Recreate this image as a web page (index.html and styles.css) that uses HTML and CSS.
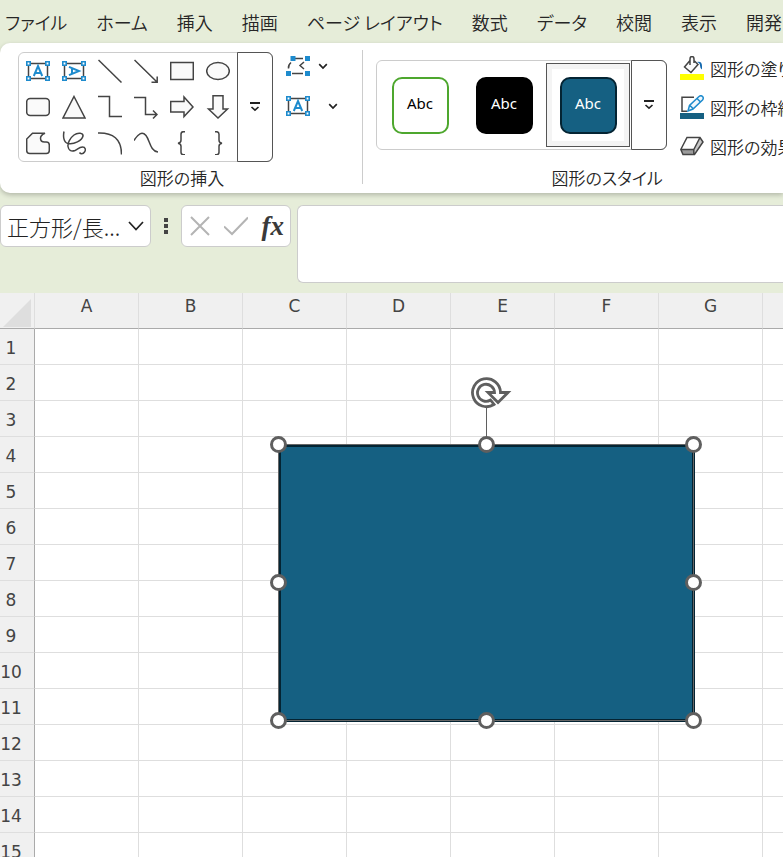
FILE: index.html
```html
<!DOCTYPE html>
<html lang="ja">
<head>
<meta charset="utf-8">
<title>Book1</title>
<link rel="stylesheet" href="styles.css">
</head>
<body>
<svg class="defs" aria-hidden="true">
  <symbol id="textbox" viewBox="0 0 24 20">
    <path class="ln" d="M2.500 2.500h19v15h-19z"/>
    <g class="knob"><path d="M.8.8h3.400v3.400H.8zM19.800.8h3.400v3.400h-3.400zM.8 15.800h3.400v3.400H.8zM19.800 15.800h3.400v3.400h-3.400z"/></g>
  </symbol>
  <symbol id="more" viewBox="0 0 12 12"><path class="dk" d="M1 2h10" stroke-width="2"/><path class="dk" d="M2.500 6L6 9.200 9.500 6" stroke-width="1.600"/></symbol>
  <symbol id="chev" viewBox="0 0 10 10"><path class="dk" d="M1.200 3.200L5 7l3.800-3.800" stroke-width="1.700"/></symbol>
</svg>

<nav class="tabs">
  <a href="#">ファイル</a><a href="#">ホーム</a><a href="#">挿入</a><a href="#">描画</a><a href="#">ページ レイアウト</a><a href="#">数式</a><a href="#">データ</a><a href="#">校閲</a><a href="#">表示</a><a href="#">開発</a>
</nav>

<section class="ribbon">
  <div class="group insert">
    <div class="tools">
      <div class="gallery">
        <div class="shapes">
          <button aria-label="テキスト ボックス"><svg viewBox="0 0 24 24"><use href="#textbox" x="0" y="2" width="24" height="20"/><path class="bl" d="M7.800 17L12 7l4.200 10M9.200 14h5.600"/></svg></button>
          <button aria-label="縦書きテキスト ボックス"><svg viewBox="0 0 24 24"><use href="#textbox" x="0" y="2" width="24" height="20"/><path class="bl" d="M7 7.800L17 12 7 16.200M10 9.200v5.600"/></svg></button>
          <button aria-label="線"><svg viewBox="0 0 24 24"><path class="ln" d="M.5 1l23 22.500"/></svg></button>
          <button aria-label="線矢印"><svg viewBox="0 0 24 24"><path class="ln" d="M.5 1l22.500 22M17.500 23.200h5.700v-5.700"/></svg></button>
          <button aria-label="正方形/長方形"><svg viewBox="0 0 24 24"><path class="ln fl" d="M.7 3.500h22.600v17H.7z"/></svg></button>
          <button aria-label="楕円"><svg viewBox="0 0 24 24"><ellipse class="ln fl" cx="12" cy="12" rx="11.300" ry="8.500"/></svg></button>
          <button aria-label="角丸四角形"><svg viewBox="0 0 24 24"><rect class="ln fl" x=".7" y="3.500" width="22.600" height="17" rx="3.500"/></svg></button>
          <button aria-label="二等辺三角形"><svg viewBox="0 0 24 24"><path class="ln fl" d="M12 1.500L23 23H1z"/></svg></button>
          <button aria-label="カギ線コネクタ"><svg viewBox="0 0 24 24"><path class="ln" d="M0 1.500h11.500v20H24"/></svg></button>
          <button aria-label="カギ線矢印コネクタ"><svg viewBox="0 0 24 24"><path class="ln" d="M0 2.500h11.500v17H23M19 15.500l4 4-4 4"/></svg></button>
          <button aria-label="右矢印"><svg viewBox="0 0 24 24"><path class="ln fl" d="M.7 6.500H14v-4.500l9 10-9 9.500v-4.500H.7z"/></svg></button>
          <button aria-label="下矢印"><svg viewBox="0 0 24 24"><path class="ln fl" d="M7 .7h10v13.300h4.500L12 23 2.500 14H7z"/></svg></button>
          <button aria-label="フリーフォーム"><svg viewBox="0 0 24 24"><path class="ln fl" d="M6.500 2.200h12.500c-2 .8-4.500 2-4.500 5 0 2.500 1.500 3.800 4 3.800h1.800q3 0 3 3v5.500q0 3-3 3H3.700q-3 0-3-3V8z"/></svg></button>
          <button aria-label="フリーハンド"><svg viewBox="0 0 24 24"><path class="ln" d="M2 .5C1 5 1.500 11.500 6 12.500c6 1.200 14-3 15-7.500.5-3-5-4-9-1-4 3-6.500 8-6 11.500s3 5.500 7 4c3-1.300 4-3.500 7.500-3.500 3 0 3.500 3 2 5-1.500 2.500-4 2-5 .5"/></svg></button>
          <button aria-label="円弧"><svg viewBox="0 0 24 24"><path class="ln" d="M0 2c15-.5 23.500 6 23.500 21.500"/></svg></button>
          <button aria-label="曲線"><svg viewBox="0 0 24 24"><path class="ln" d="M0 9.500C4 3 8 0 12 4.500c4 5 4 15.500 12 16.500"/></svg></button>
          <button aria-label="左中かっこ"><svg viewBox="0 0 24 24"><path class="ln" d="M15 .7h-1.500q-2.500 0-2.500 2.500v6q0 2.500-3 3 3 .5 3 3v6q0 2.500 2.500 2.500H15"/></svg></button>
          <button aria-label="右中かっこ"><svg viewBox="0 0 24 24"><path class="ln" d="M9 .7h1.500q2.500 0 2.500 2.500v6q0 2.500 3 3-3 .5-3 3v6q0 2.500-2.500 2.500H9"/></svg></button>
        </div>
        <button class="expand" aria-label="その他の図形"><svg width="12" height="12"><use href="#more"/></svg></button>
      </div>
      <div class="edit">
        <button aria-label="図形の編集"><svg width="24" height="20" viewBox="0 0 24 20"><path class="ln" d="M9 2.500h8M6 17.500h11M5 6.500Q2 9 2.500 12.500M18 6l-4 3.500 4 3.500"/><path fill="#1e8bcd" d="M4.500 0h5v5h-5zM19 0h5v5h-5zM0 15h5v5H0zM19 15h5v5h-5z"/></svg><svg width="10" height="10"><use href="#chev"/></svg></button>
        <button class="wide" aria-label="テキスト ボックスの描画"><svg width="24" height="20" viewBox="0 0 24 20"><use href="#textbox" width="24" height="20"/><path class="bl" d="M7.800 15L12 5l4.200 10M9.200 12h5.600"/></svg><svg width="10" height="10"><use href="#chev"/></svg></button>
      </div>
    </div>
    <div class="caption">図形の挿入</div>
  </div>

  <div class="group styles">
    <div class="tools">
      <div class="gallery presets">
        <button class="preset"><span class="swatch green">Abc</span></button>
        <button class="preset"><span class="swatch black">Abc</span></button>
        <button class="preset selected"><span class="swatch blue">Abc</span></button>
        <button class="expand" aria-label="その他のスタイル"><svg width="12" height="12"><use href="#more"/></svg></button>
      </div>
      <div class="effects">
        <button><svg width="24" height="24" viewBox="0 0 24 24"><path fill="#ff0" d="M0 18h24v6H0z"/><path class="ln fl" d="M10 4.500L4.500 11l6.500 5.500 7-8-3.500-3.500M10 9V3q0-2.500 2-2.500T14 3v4"/><path fill="#1468ae" d="M16.500 6q5.500-1.500 5.500 4v3.500q-2-1-2-4T16.500 6z"/></svg>図形の塗りつぶし</button>
        <button><svg width="24" height="24" viewBox="0 0 24 24"><path fill="#156082" d="M0 18h24v6H0z"/><path class="ln" d="M14 2.200H2v14h5"/><path d="M8 16l1.500-5.500L19 1.500q2-1.500 3.500 0t0 3.500L13 14z M10 10.500l3 3M17 3.500l3.500 3.500" fill="#f0f7fc" stroke="#1e8bcd" stroke-width="1.500"/></svg>図形の枠線</button>
        <button><svg width="24" height="24" viewBox="0 0 24 24"><path fill="#9b9b9b" d="M.8 15.500h13l-1 5H3z"/><path fill="#c8c8c8" d="M13.800 15.500L20 3.500l3 4.500-8.500 12.500h-2z"/><path class="ln" d="M7 3.500h13l3 4.500-8.500 12.500H3l-2.200-5zM.8 15.500h13L20 3.500M13.800 15.500v5"/></svg>図形の効果</button>
      </div>
    </div>
    <div class="caption">図形のスタイル</div>
  </div>
</section>

<section class="formula">
  <div class="namebox">
    <input type="text" value="正方形/長..." aria-label="名前ボックス">
    <button aria-label="名前の一覧"><svg width="16" height="16" viewBox="0 0 16 16"><path class="dk" d="M1 4l7 7.500L15 4" stroke-width="1.700"/></svg></button>
  </div>
  <svg class="dots" width="4" height="16" viewBox="0 0 4 16"><path fill="#444" d="M0 0h4v4H0zM0 6h4v4H0zM0 12h4v4H0z"/></svg>
  <div class="actions">
    <button aria-label="キャンセル"><svg width="20" height="20" viewBox="0 0 20 20"><path class="off" d="M1 1l18 18M19 1L1 19"/></svg></button>
    <button aria-label="入力"><svg width="24" height="20" viewBox="0 0 24 20"><path class="off" d="M0 10.500l8 7.500L24 1.500"/></svg></button>
    <button class="fx" aria-label="関数の挿入"><i>fx</i></button>
  </div>
  <textarea aria-label="数式バー"></textarea>
</section>

<main class="sheet">
  <table>
    <thead><tr><th class="corner"><svg width="28" height="28" viewBox="0 0 28 28"><path fill="#dedede" d="M28 0v28H0z"/></svg></th><th>A</th><th>B</th><th>C</th><th>D</th><th>E</th><th>F</th><th>G</th><th>H</th></tr></thead>
    <tbody>
      <tr><th>1</th><td></td><td></td><td></td><td></td><td></td><td></td><td></td><td></td></tr>
      <tr><th>2</th><td></td><td></td><td></td><td></td><td></td><td></td><td></td><td></td></tr>
      <tr><th>3</th><td></td><td></td><td></td><td></td><td></td><td></td><td></td><td></td></tr>
      <tr><th>4</th><td></td><td></td><td></td><td></td><td></td><td></td><td></td><td></td></tr>
      <tr><th>5</th><td></td><td></td><td></td><td></td><td></td><td></td><td></td><td></td></tr>
      <tr><th>6</th><td></td><td></td><td></td><td></td><td></td><td></td><td></td><td></td></tr>
      <tr><th>7</th><td></td><td></td><td></td><td></td><td></td><td></td><td></td><td></td></tr>
      <tr><th>8</th><td></td><td></td><td></td><td></td><td></td><td></td><td></td><td></td></tr>
      <tr><th>9</th><td></td><td></td><td></td><td></td><td></td><td></td><td></td><td></td></tr>
      <tr><th>10</th><td></td><td></td><td></td><td></td><td></td><td></td><td></td><td></td></tr>
      <tr><th>11</th><td></td><td></td><td></td><td></td><td></td><td></td><td></td><td></td></tr>
      <tr><th>12</th><td></td><td></td><td></td><td></td><td></td><td></td><td></td><td></td></tr>
      <tr><th>13</th><td></td><td></td><td></td><td></td><td></td><td></td><td></td><td></td></tr>
      <tr><th>14</th><td></td><td></td><td></td><td></td><td></td><td></td><td></td><td></td></tr>
      <tr><th>15</th><td></td><td></td><td></td><td></td><td></td><td></td><td></td><td></td></tr>
    </tbody>
  </table>
  <svg class="shape" width="433" height="355" viewBox="0 0 433 355">
    <rect x="9.500" y="71.500" width="414" height="275" fill="#156082" stroke="#042433" stroke-width="3"/>
    <rect x="8.500" y="70.500" width="415" height="276" fill="none" stroke="#666"/>
    <path d="M216.500 34v36" stroke="#5f5f5f"/>
    <path d="M230.500 18.500A14 14 0 1 0 224 30.500L220.500 26A8.500 8.500 0 1 1 224.500 18.500H218L228 28.500 238 18.500z" fill="#fff" stroke="#5f5f5f" stroke-width="2.800"/>
    <g fill="#fff" stroke="#5f5f5f" stroke-width="3">
      <circle cx="8.500" cy="70.500" r="7"/><circle cx="216.500" cy="70.500" r="7"/><circle cx="423.500" cy="70.500" r="7"/>
      <circle cx="8.500" cy="208.500" r="7"/><circle cx="423.500" cy="208.500" r="7"/>
      <circle cx="8.500" cy="346.500" r="7"/><circle cx="216.500" cy="346.500" r="7"/><circle cx="423.500" cy="346.500" r="7"/>
    </g>
  </svg>
</main>
</body>
</html>
```
FILE: styles.css
```css
* { box-sizing: border-box; }

body {
  margin: 0;
  height: 100vh;
  overflow: hidden;
  display: flex;
  flex-direction: column;
  background: #e6edd9;
  color: #262626;
  font-family: "Noto Sans CJK JP", sans-serif;
  font-size: 17px;
  font-weight: 350;
  font-feature-settings: "palt";
}

button {
  display: flex;
  align-items: center;
  justify-content: center;
  padding: 0;
  border: 0;
  background: none;
  color: inherit;
  font: inherit;
  font-feature-settings: inherit;
}

svg { flex: none; }
.defs { position: absolute; width: 0; height: 0; }
.ln { fill: none; stroke: #444; stroke-width: 1.5; }
.fl { fill: #fafafa; }
.bl { fill: none; stroke: #1e8bcd; stroke-width: 2; }
.dk { fill: none; stroke: #222; }
.off { fill: none; stroke: #b4b4b4; stroke-width: 2; }
.knob path { fill: #fff; stroke: #1e8bcd; stroke-width: 1.6; }

.tabs {
  display: flex;
  flex: none;
  gap: 29px;
  height: 43px;
  padding-left: 5px;
  align-items: center;
  font-size: 18px;
  white-space: nowrap;
}
.tabs a { color: inherit; text-decoration: none; }

.ribbon {
  display: flex;
  flex: none;
  height: 150px;
  padding-top: 7px;
  overflow: hidden;
  background: #fff;
  border-radius: 10px 0 0 10px;
  box-shadow: 0 2px 5px #0000003a;
}
.group {
  display: flex;
  flex: none;
  flex-direction: column;
  height: 134px;
  padding-top: 2px;
  border-right: 1px solid #ccc;
}
.insert { min-width: 363px; padding-left: 18px; padding-right: 16px; }
.tools { display: flex; flex: none; height: 110px; gap: 13px; }
.caption { flex: none; line-height: 32px; text-align: center; }

.gallery {
  display: flex;
  border: 1px solid #ccc;
  border-radius: 6px;
}
.shapes {
  display: grid;
  grid-template-columns: repeat(6, 36px);
  grid-template-rows: repeat(3, 36px);
  padding: 0 1px;
}
.shapes svg { width: 24px; height: 24px; }
.expand {
  width: 36px;
  margin: -1px -1px -1px 0;
  border: 1px solid #555;
  border-radius: 0 6px 6px 0;
}
.edit { display: flex; flex-direction: column; align-items: flex-start; gap: 20px; padding-top: 4px; }
.edit button { gap: 8px; height: 20px; }
.edit .wide { gap: 18px; }

.styles { min-width: 480px; padding-left: 13px; padding-right: 14px; }
.styles .tools { align-items: center; }
.presets { align-self: flex-start; height: 90px; margin-top: 8px; align-items: center; padding-left: 1px; }
.presets .expand { height: 90px; margin-left: 1px; }
.preset { width: 84px; height: 84px; }
.selected { border: 1px solid #555; background: #fff; box-shadow: inset 0 0 0 5px #f4f4f4; }
.swatch {
  width: 57px;
  height: 57px;
  border: 2px solid;
  border-radius: 10px;
  font: 15px/49px "Noto Sans", sans-serif;
  text-align: center;
}
.green { border-color: #4ea72e; color: #000; }
.black { border-color: #000; background: #000; color: #fff; }
.blue { border-color: #042433; background: #156082; color: #fff; }
.effects { display: flex; flex-direction: column; gap: 15px; }
.effects button { justify-content: flex-start; gap: 6px; height: 24px; white-space: nowrap; }

.formula {
  display: flex;
  flex: none;
  align-items: flex-start;
  height: 100px;
  padding-top: 12px;
}
.namebox, .actions, .formula textarea {
  border: 1px solid #ccc;
  border-radius: 6px;
  background: #fff;
}
.namebox { display: flex; width: 151px; height: 42px; }
.namebox input {
  flex: 1;
  min-width: 0;
  padding: 0 0 0 6px;
  border: 0;
  background: none;
  color: #222;
  font: 300 22px "Noto Sans CJK JP", sans-serif;
}
.namebox button { width: 28px; }
.dots { margin: 13px 13px 0; }
.actions { display: flex; width: 110px; height: 42px; padding: 0 6px 0 8px; justify-content: space-between; }
.fx { font: bold 27px "Liberation Serif", serif; color: #3a3a3a; }
.formula textarea { flex: 1; height: 78px; margin-left: 6px; border-right: 0; border-radius: 6px 0 0 6px; resize: none; }

.sheet { position: relative; flex: 1; overflow: hidden; background: #fff; }
table { width: 867px; table-layout: fixed; border-collapse: separate; border-spacing: 0; }
th, td { height: 36px; padding: 0; border: solid #dedede; border-width: 0 1px 1px 0; }
th { background: #f0f0f0; color: #444; font: 17px "DejaVu Sans", sans-serif; }
thead th { padding-bottom: 9px; border-bottom-color: #aaa; }
thead .corner { width: 35px; padding: 4px 0 0 3px; }
.corner svg { display: block; }
tbody th { border-right-color: #aaa; padding: 2px 12px 0 0; }

.shape { position: absolute; left: 270px; top: 81px; }
```
